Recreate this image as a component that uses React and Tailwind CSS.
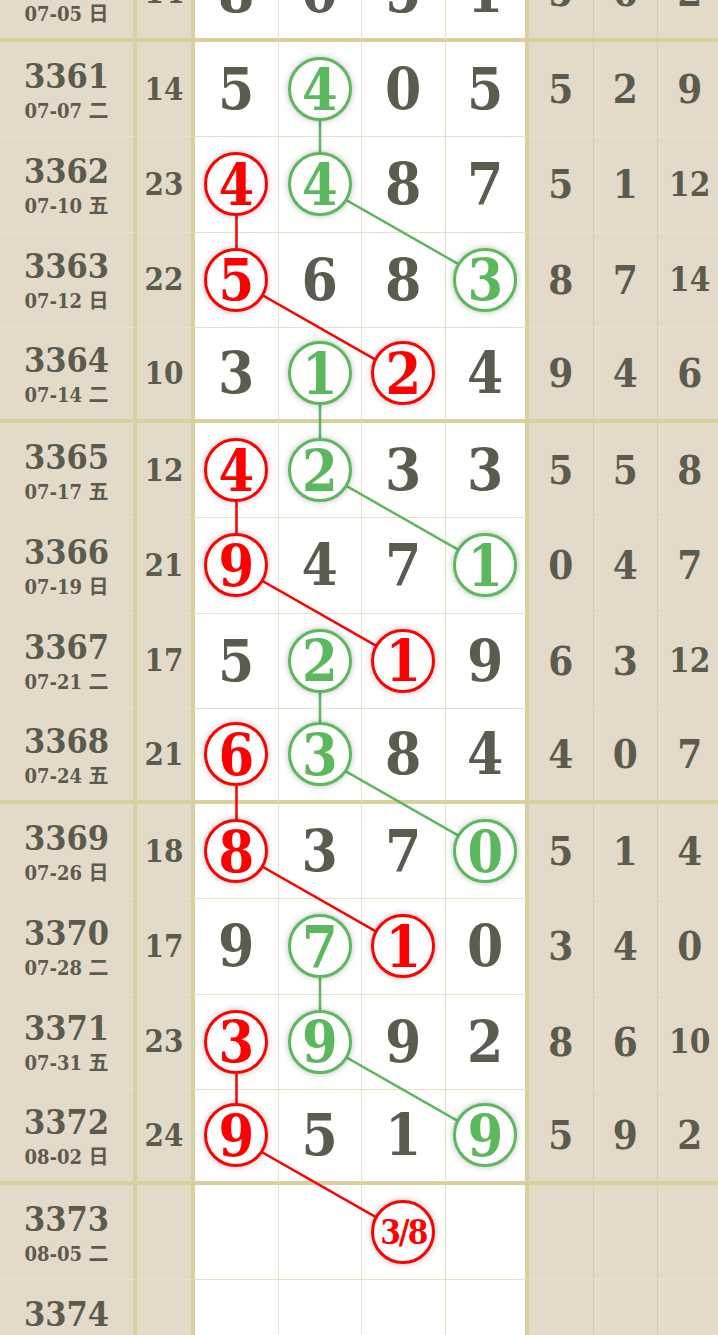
import React from 'react';

const ROW_H = 95.25;
const TOP = -53.25;

// period, date, sum, digits, right stats, red col, green col
const rows = [
  { p: 3360, d: '07-05', w: '日', s: 14, n: [8, 0, 5, 1], r: [5, 6, 2] },
  { p: 3361, d: '07-07', w: '二', s: 14, n: [5, 4, 0, 5], r: [5, 2, 9], g: 1 },
  { p: 3362, d: '07-10', w: '五', s: 23, n: [4, 4, 8, 7], r: [5, 1, 12], red: 0, g: 1 },
  { p: 3363, d: '07-12', w: '日', s: 22, n: [5, 6, 8, 3], r: [8, 7, 14], red: 0, g: 3 },
  { p: 3364, d: '07-14', w: '二', s: 10, n: [3, 1, 2, 4], r: [9, 4, 6], red: 2, g: 1 },
  { p: 3365, d: '07-17', w: '五', s: 12, n: [4, 2, 3, 3], r: [5, 5, 8], red: 0, g: 1 },
  { p: 3366, d: '07-19', w: '日', s: 21, n: [9, 4, 7, 1], r: [0, 4, 7], red: 0, g: 3 },
  { p: 3367, d: '07-21', w: '二', s: 17, n: [5, 2, 1, 9], r: [6, 3, 12], red: 2, g: 1 },
  { p: 3368, d: '07-24', w: '五', s: 21, n: [6, 3, 8, 4], r: [4, 0, 7], red: 0, g: 1 },
  { p: 3369, d: '07-26', w: '日', s: 18, n: [8, 3, 7, 0], r: [5, 1, 4], red: 0, g: 3 },
  { p: 3370, d: '07-28', w: '二', s: 17, n: [9, 7, 1, 0], r: [3, 4, 0], red: 2, g: 1 },
  { p: 3371, d: '07-31', w: '五', s: 23, n: [3, 9, 9, 2], r: [8, 6, 10], red: 0, g: 1 },
  { p: 3372, d: '08-02', w: '日', s: 24, n: [9, 5, 1, 9], r: [5, 9, 2], red: 0, g: 3 },
  { p: 3373, d: '08-05', w: '二', s: null, n: [null, null, '3/8', null], r: [null, null, null], red: 2 },
  { p: 3374, d: '08-07', w: '四', s: null, n: [null, null, null, null], r: [null, null, null] },
];

const colX = [236.5, 320, 403.5, 487];
const rowY = (i) => i * ROW_H + ROW_H / 2;

const redPaths = [[2, 3, 4], [5, 6, 7], [8, 9, 10], [11, 12, 13]];
const greenPaths = [[1, 2, 3], [4, 5, 6], [7, 8, 9], [10, 11, 12]];

const serif = { fontFamily: '"DejaVu Serif Condensed", "DejaVu Serif", "Noto Sans CJK SC", serif' };

function Ball({ v, color }) {
  const red = color === 'red';
  const small = typeof v === 'string';
  return (
    <div
      className={`relative z-20 flex h-[64px] w-[64px] items-center justify-center rounded-full border-[3px] bg-white font-bold shadow-[0_0_6px_rgba(0,0,0,0.28)] ${
        red ? 'border-[#ff0000] text-[#ff0000]' : 'border-[#5cb85c] text-[#5cb85c]'
      } ${small ? 'text-[33px] tracking-[-2px]' : 'text-[57px]'}`}
    >
      <span className="leading-none">{v}</span>
    </div>
  );
}

function Row({ row, idx }) {
  const thick = idx % 4 === 0;
  const bb = thick ? 'border-b-[4px] border-b-[#d9cf9f]' : 'border-b border-b-[#e8e2c4]';
  return (
    <div className="flex" style={{ height: ROW_H }}>
      <div className={`flex w-[137px] shrink-0 flex-col items-center justify-center border-r-[4px] border-r-[#d9cf9f] bg-[#e3dac9] ${bb}`}>
        <div className="text-[34px] font-bold leading-[40px] text-[#5b5c4f]">{row.p}</div>
        <div className="mt-[2px] text-[20px] font-bold leading-[24px] text-[#5b5c4f]">
          {row.d} <span style={{ fontFamily: '"Noto Sans CJK SC", sans-serif' }}>{row.w}</span>
        </div>
      </div>
      <div className={`flex w-[58px] shrink-0 items-center justify-center border-r-[4px] border-r-[#d9cf9f] bg-[#e3dac9] text-[31px] font-bold text-[#5b5c4f] ${bb}`}>
        {row.s}
      </div>
      {row.n.map((v, c) => (
        <div
          key={c}
          className={`flex w-[83.5px] shrink-0 items-center justify-center bg-white ${bb} ${
            c === 3 ? 'border-r-[4px] border-r-[#d9cf9f]' : 'border-r border-r-[#e8e2c4]'
          }`}
        >
          {row.red === c ? (
            <Ball v={v} color="red" />
          ) : row.g === c ? (
            <Ball v={v} color="green" />
          ) : (
            <span className="text-[58px] font-bold leading-none text-[#5b5c4f]">{v}</span>
          )}
        </div>
      ))}
      {row.r.map((v, c) => (
        <div
          key={c}
          className={`flex w-[64.5px] shrink-0 items-center justify-center border-r border-r-[#d8cea6] bg-[#e3dac9] font-bold text-[#5b5c4f] ${bb} ${
            v !== null && v > 9 ? 'text-[33px]' : 'text-[40px]'
          }`}
        >
          {v}
        </div>
      ))}
    </div>
  );
}

export default function App() {
  const pts = (list, key) =>
    list
      .map((i) => {
        const r = rows[i];
        return `${colX[key === 'red' ? r.red : r.g]},${rowY(i)}`;
      })
      .join(' ');

  return (
    <div className="h-[1335px] w-[718px] overflow-hidden bg-white" style={serif}>
      <div className="relative w-[740px]" style={{ marginTop: TOP }}>
        {rows.map((row, i) => (
          <Row key={row.p} row={row} idx={i} />
        ))}
        <svg
          className="pointer-events-none absolute left-0 top-0 z-10"
          width="740"
          height={rows.length * ROW_H}
        >
          {redPaths.map((p, k) => (
            <polyline key={'r' + k} points={pts(p, 'red')} fill="none" stroke="#ff0000" strokeWidth="2.5" />
          ))}
          {greenPaths.map((p, k) => (
            <polyline key={'g' + k} points={pts(p, 'green')} fill="none" stroke="#5cb85c" strokeWidth="2.5" />
          ))}
        </svg>
      </div>
    </div>
  );
}
